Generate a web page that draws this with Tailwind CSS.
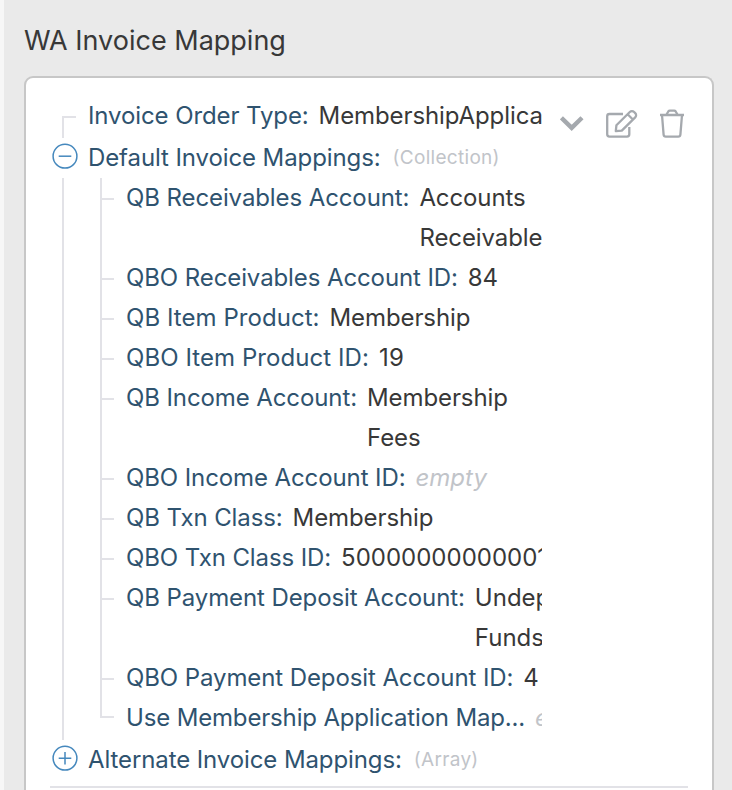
<!DOCTYPE html>
<html lang="en">
<head>
<meta charset="utf-8">
<title>WA Invoice Mapping</title>
<script src="https://cdn.jsdelivr.net/npm/@tailwindcss/browser@4"></script>
</head>
<body class="h-[790px] overflow-hidden border-l-4 border-[#f7f7f7] bg-[#eaeaea] font-[Inter,sans-serif] text-[#383838]">
<main class="pl-5 pt-5">
  <h1 class="h-14 text-[27px] leading-[41px]">WA Invoice Mapping</h1>

  <section class="flex h-[714px] w-[690px] rounded-t-[9px] border-2 border-b-0 border-[#c7c7c7] bg-white pl-6 pr-6 pt-[18px]">
    <div class="w-full">
      <div class="flex h-[692px] border-b-2 border-[#e2e2e7]">
        <!-- Tree -->
        <div class="w-[492px] shrink-0 overflow-hidden whitespace-nowrap text-[24px] leading-10 tracking-[-0.1px]">
          <div class="flex h-[42px]">
            <div class="w-[38px] shrink-0 pl-3 pt-5"><div class="h-[22px] w-3.5 border-l-2 border-t-2 border-[#e2e2e7]"></div></div>
            <div class="flex gap-[10px]"><span class="text-[#2f536f]">Invoice Order Type:</span><span>MembershipApplica</span></div>
          </div>

          <div class="flex h-10">
            <div class="w-[38px] shrink-0 pl-0.5 pt-[5px]">
              <svg class="size-[26px]" viewBox="0 0 26 26" fill="none" stroke="#4588bd" stroke-width="1.5"><circle cx="13" cy="13.2" r="11.9"/><path d="M6.7 13.2h12.6"/></svg>
            </div>
            <div class="flex gap-[12px]"><span class="text-[#2f536f]">Default Invoice Mappings:</span><span class="text-[19px] tracking-[0.3px] text-[#c1c4c9]">(Collection)</span></div>
          </div>

          <div class="flex h-[562px]">
            <div class="w-[38px] shrink-0 pl-3"><div class="h-full w-0.5 bg-[#e2e2e7]"></div></div>
            <div class="flex items-start">
              <div class="w-[38px] shrink-0 pl-3">
                <div class="h-[540px] w-3.5 border-b-2 border-l-2 border-[#e2e2e7] pt-5">
                  <div class="h-20 border-t-2 border-[#e2e2e7]"></div>
                  <div class="h-10 border-t-2 border-[#e2e2e7]"></div>
                  <div class="h-10 border-t-2 border-[#e2e2e7]"></div>
                  <div class="h-10 border-t-2 border-[#e2e2e7]"></div>
                  <div class="h-20 border-t-2 border-[#e2e2e7]"></div>
                  <div class="h-10 border-t-2 border-[#e2e2e7]"></div>
                  <div class="h-10 border-t-2 border-[#e2e2e7]"></div>
                  <div class="h-10 border-t-2 border-[#e2e2e7]"></div>
                  <div class="h-20 border-t-2 border-[#e2e2e7]"></div>
                  <div class="border-t-2 border-[#e2e2e7]"></div>
                </div>
              </div>
              <div>
                <div class="flex gap-[10px]"><span class="text-[#2f536f]">QB Receivables Account:</span><span>Accounts<br>Receivable</span></div>
                <div class="flex gap-[10px]"><span class="text-[#2f536f]">QBO Receivables Account ID:</span><span>84</span></div>
                <div class="flex gap-[10px]"><span class="text-[#2f536f] tracking-[0.05px]">QB Item Product:</span><span>Membership</span></div>
                <div class="flex gap-[10px]"><span class="text-[#2f536f] tracking-[0.07px]">QBO Item Product ID:</span><span class="tracking-[0.3px]">19</span></div>
                <div class="flex gap-[10px]"><span class="text-[#2f536f]">QB Income Account:</span><span>Membership<br>Fees</span></div>
                <div class="flex gap-[10px]"><span class="text-[#2f536f]">QBO Income Account ID:</span><span class="italic text-[#c1c4c9] tracking-normal">empty</span></div>
                <div class="flex gap-[10px]"><span class="text-[#2f536f]">QB Txn Class:</span><span>Membership</span></div>
                <div class="flex gap-[10px]"><span class="text-[#2f536f]">QBO Txn Class ID:</span><span class="tracking-normal">50000000000001</span></div>
                <div class="flex gap-[10px]"><span class="text-[#2f536f]">QB Payment Deposit Account:</span><span class="tracking-normal">Undeposited<br>Funds</span></div>
                <div class="flex gap-[10px]"><span class="text-[#2f536f]">QBO Payment Deposit Account ID:</span><span>4</span></div>
                <div class="flex gap-[10px]"><span class="text-[#2f536f] tracking-[-0.16px]">Use Membership Application Map...</span><span class="italic text-[#c1c4c9]">empty</span></div>
              </div>
            </div>
          </div>

          <div class="flex h-10">
            <div class="w-[38px] shrink-0 pl-0.5 pt-[5px]">
              <svg class="size-[26px]" viewBox="0 0 26 26" fill="none" stroke="#4588bd" stroke-width="1.5"><circle cx="13" cy="13.2" r="11.9"/><path d="M6.7 13.2h12.6M13 6.9v12.6"/></svg>
            </div>
            <div class="flex gap-[12px]"><span class="text-[#2f536f]">Alternate Invoice Mappings:</span><span class="text-[19px] tracking-[0.3px] text-[#c1c4c9]">(Array)</span></div>
          </div>
        </div>

        <!-- Row actions -->
        <svg class="ml-[18px] mt-[9px] h-[38px] w-[128px] shrink-0" viewBox="560 105 128 38" fill="none" stroke="#a5a9ae" stroke-width="2.3">
          <path d="M561.400 117.700 571.700 127.800 582 117.700" stroke-width="4.4"/>
          <path d="M623 114H609.500a2.300 2.300 0 0 0-2.300 2.300V134.300a2.300 2.300 0 0 0 2.300 2.300H627a2.300 2.300 0 0 0 2.300-2.300V127"/>
          <path d="M615.800 131.200 616.400 125.300 629.800 112a3 3 0 0 1 4.300 0l1.100 1.100a3 3 0 0 1 0 4.300L621.800 130.600ZM627.600 114.200 632.900 119.500" stroke-linejoin="round"/>
          <path d="M660 115H684M662 115 663.600 134.600a2.200 2.200 0 0 0 2.200 2H678.200a2.200 2.200 0 0 0 2.200-2L682 115M666.500 114.500 668.300 111.500a1.800 1.800 0 0 1 1.500-.8H674.200a1.800 1.800 0 0 1 1.500.8L677.500 114.500"/>
        </svg>
      </div>
    </div>
  </section>
</main>
</body>
</html>
